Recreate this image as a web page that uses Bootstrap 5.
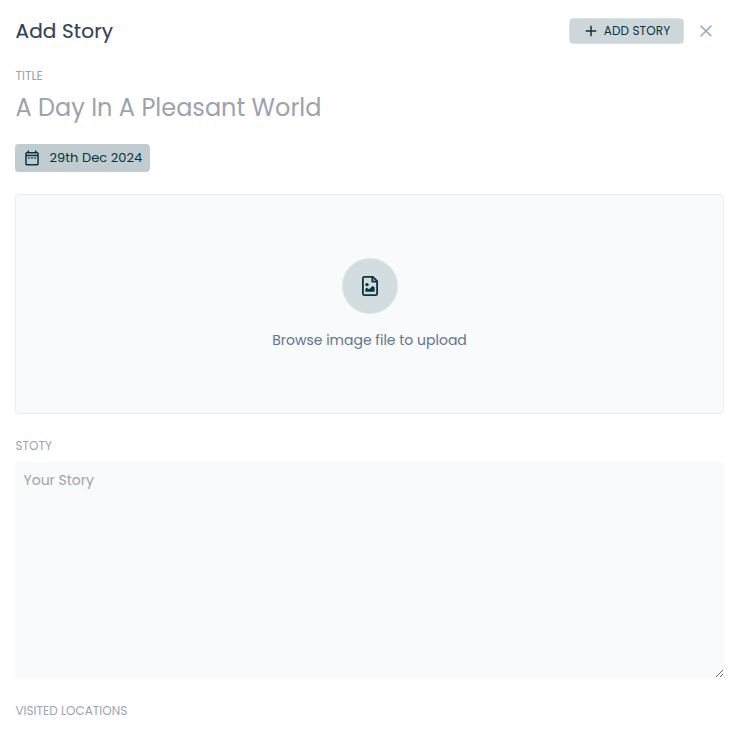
<!DOCTYPE html>
<html lang="en">
<head>
<meta charset="utf-8">
<meta name="viewport" content="width=device-width, initial-scale=1">
<title>Add Story</title>
<link href="https://cdn.jsdelivr.net/npm/bootstrap@5.3.0/dist/css/bootstrap.min.css" rel="stylesheet">
<style>
body{font-family:Poppins,Inter,"Open Sans",sans-serif;overflow:hidden;background:#fff}
.story-panel{padding:18px 19px 0 15px}
.story-head{height:26px}
.story-heading{font-size:20px;line-height:26px;color:#334155;font-weight:400;letter-spacing:.15px;padding-left:.5px;-webkit-text-stroke:.15px currentColor}
.btn-add{--bs-btn-bg:#cdd6d9;--bs-btn-color:#073642;--bs-btn-border-color:#d8e1e3;--bs-btn-hover-bg:#bdcacd;width:115px;height:26px;font-size:12px;font-weight:400;border-radius:4px;letter-spacing:.12px;gap:7px}
.btn-add svg{margin-left:2px}
.btn-close-x{color:#94a3b8;width:14px;height:14px;margin:0 11px 0 15px}
.field-label{font-size:12px;line-height:18px;color:#9aa3b8;padding-left:.5px}
.label-title{margin-top:23px}
.title-input{font-size:24px;line-height:36px;height:36px;margin-top:5px;padding:0 0 0 .5px;color:#0f172a;outline:0}
.title-input::placeholder,.story-text::placeholder{color:#9ca3af;opacity:1}
.date-chip{width:135px;height:28px;margin-top:18px;padding-left:8px;background:#c0cccf;color:#073642;font-size:13px;font-weight:400;letter-spacing:.05px;border-radius:4px;gap:8.500px}
.upload-box{height:220px;margin-top:22px;background:#f8fafc;border:1px solid #e9eef3;border-radius:4px;padding:0}
.upload-circle{width:56px;height:56px;background:#d3dcdf;border:1px solid #dce5e8;color:#073642}
.upload-text{font-size:14px;line-height:20px;color:#64748b;margin-top:16px}
.label-story{margin-top:23px}
.story-text{height:216px;margin-top:7px;padding:8px 8.500px;background:#f8fafc;font-size:14px;line-height:20px;outline:0;resize:vertical;border-radius:2px}
.label-places{margin-top:24px}
</style>
</head>
<body>
<main class="story-panel">
  <header class="story-head d-flex align-items-center justify-content-between">
    <h1 class="story-heading m-0">Add Story</h1>
    <div class="d-flex align-items-center">
      <button class="btn btn-add p-0 d-flex align-items-center justify-content-center" type="button">
        <svg width="12" height="12" viewBox="0 0 12 12" fill="none" stroke="currentColor" stroke-width="1.5"><path d="M6 .7v10.6M.7 6h10.6"/></svg>
        <span>ADD STORY</span>
      </button>
      <button class="btn btn-close-x p-0 border-0 d-flex" type="button" aria-label="Close">
        <svg width="14" height="14" viewBox="0 0 14 14" fill="none" stroke="currentColor" stroke-width="1.5"><path d="M1.7 1.7l10.6 10.6M12.3 1.7L1.7 12.3"/></svg>
      </button>
    </div>
  </header>
  <div class="d-flex flex-column">
    <label class="field-label label-title" for="title">TITLE</label>
    <input class="title-input border-0 bg-transparent w-100" id="title" type="text" placeholder="A Day In A Pleasant World">
  </div>
  <button class="btn date-chip border-0 py-0 pe-0 d-flex align-items-center" type="button">
    <svg width="18" height="18" viewBox="0 0 24 24" fill="currentColor"><path d="M7 11h2v2H7zm4 0h2v2h-2zm4 0h2v2h-2z"/><path d="M19 4h-1V2h-2v2H8V2H6v2H5a2 2 0 0 0-2 2v14a2 2 0 0 0 2 2h14a2 2 0 0 0 2-2V6a2 2 0 0 0-2-2zm0 16H5V9.500h14zM5 7.500V6h14v1.500z"/></svg>
    <span class="text-nowrap">29th Dec 2024</span>
  </button>
  <button class="btn upload-box w-100 d-flex flex-column align-items-center justify-content-center" type="button">
    <span class="upload-circle rounded-circle d-flex align-items-center justify-content-center">
      <svg width="16" height="20" viewBox="0 0 16 20" fill="none" stroke="currentColor" stroke-width="1.800" stroke-linejoin="round"><path d="M2.200 .9h8.600l4.300 4.300v12.600a1.300 1.300 0 0 1-1.300 1.300H2.200A1.300 1.300 0 0 1 .9 17.800V2.200A1.300 1.300 0 0 1 2.200 .9z"/><path d="M10.300 .9v4.800h4.800"/><path d="M3.400 15.800v-3.100l1.300-.9 2.400 1.500 3.400-3.300 2.100 1.300v4.500z" fill="currentColor" stroke="none"/><circle cx="5" cy="8.600" r="1.700" fill="currentColor" stroke="none"/></svg>
    </span>
    <span class="upload-text">Browse image file to upload</span>
  </button>
  <div class="d-flex flex-column">
    <label class="field-label label-story" for="story">STOTY</label>
    <textarea class="story-text border-0 w-100" id="story" placeholder="Your Story"></textarea>
  </div>
  <div class="field-label label-places">VISITED LOCATIONS</div>
</main>
<script src="https://cdn.jsdelivr.net/npm/bootstrap@5.3.0/dist/js/bootstrap.bundle.min.js"></script>
</body>
</html>
